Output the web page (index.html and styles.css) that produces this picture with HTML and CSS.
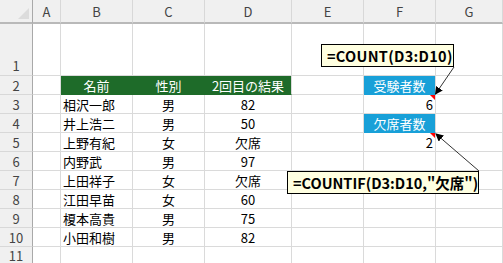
FILE: index.html
```html
<!DOCTYPE html>
<html lang="ja">
<head>
<meta charset="utf-8">
<link rel="stylesheet" href="styles.css">
</head>
<body>
<div class="sheet">
  <div class="corner"><span class="tri"></span></div>
  <div class="ch">A</div><div class="ch">B</div><div class="ch">C</div><div class="ch">D</div><div class="ch">E</div><div class="ch">F</div><div class="ch">G</div>

  <div class="rh r1">1</div><div class="c"></div><div class="c"></div><div class="c"></div><div class="c"></div><div class="c"></div><div class="c"></div><div class="c"></div>

  <div class="rh">2</div><div class="c"></div><div class="c green ctr">名前</div><div class="c green ctr">性別</div><div class="c green ctr last">2回目の結果</div><div class="c"></div><div class="c blue ctr">受験者数</div><div class="c"></div>

  <div class="rh">3</div><div class="c"></div><div class="c">相沢一郎</div><div class="c ctr">男</div><div class="c ctr">82</div><div class="c"></div><div class="c rgt mark">6</div><div class="c"></div>

  <div class="rh">4</div><div class="c"></div><div class="c">井上浩二</div><div class="c ctr">男</div><div class="c ctr">50</div><div class="c"></div><div class="c blue ctr">欠席者数</div><div class="c"></div>

  <div class="rh">5</div><div class="c"></div><div class="c">上野有紀</div><div class="c ctr">女</div><div class="c ctr">欠席</div><div class="c"></div><div class="c rgt mark">2</div><div class="c"></div>

  <div class="rh">6</div><div class="c"></div><div class="c">内野武</div><div class="c ctr">男</div><div class="c ctr">97</div><div class="c"></div><div class="c"></div><div class="c"></div>

  <div class="rh">7</div><div class="c"></div><div class="c">上田祥子</div><div class="c ctr">女</div><div class="c ctr">欠席</div><div class="c"></div><div class="c"></div><div class="c"></div>

  <div class="rh">8</div><div class="c"></div><div class="c">江田早苗</div><div class="c ctr">女</div><div class="c ctr">60</div><div class="c"></div><div class="c"></div><div class="c"></div>

  <div class="rh">9</div><div class="c"></div><div class="c">榎本高貴</div><div class="c ctr">男</div><div class="c ctr">75</div><div class="c"></div><div class="c"></div><div class="c"></div>

  <div class="rh">10</div><div class="c"></div><div class="c">小田和樹</div><div class="c ctr">男</div><div class="c ctr">82</div><div class="c"></div><div class="c"></div><div class="c"></div>

  <div class="rh last-row">11</div><div class="c"></div><div class="c"></div><div class="c"></div><div class="c"></div><div class="c"></div><div class="c"></div><div class="c"></div>

  <svg class="arrows" width="503" height="263" viewBox="0 0 503 263">
    <defs>
      <marker id="ah" markerWidth="8" markerHeight="8" refX="7" refY="4" orient="auto" markerUnits="userSpaceOnUse">
        <path d="M0,0 L8,4 L0,8 Z" fill="#000"/>
      </marker>
    </defs>
    <line x1="454" y1="67" x2="435.5" y2="94" stroke="#333" stroke-width="1" marker-end="url(#ah)"/>
    <line x1="479" y1="171" x2="436" y2="134" stroke="#333" stroke-width="1" marker-end="url(#ah)"/>
  </svg>

  <div class="note note1">=COUNT(D3:D10)</div>
  <div class="note note2">=COUNTIF(D3:D10,"欠席")</div>
</div>
</body>
</html>
```

FILE: styles.css
```css
html, body {
  margin: 0;
  padding: 0;
  background: #ffffff;
  overflow: hidden;
}

body {
  font-family: "Noto Sans CJK JP", "Noto Sans", sans-serif;
}

.sheet {
  position: relative;
  display: grid;
  grid-template-columns: 33px 28px 72px 72px 87px 72px 72px 67px;
  grid-template-rows: 24px 52px repeat(9, 19px) 17px;
  width: 503px;
  height: 263px;
  overflow: hidden;
}

.corner {
  background: #f0f0f0;
  border-right: 1px solid #a9a9a9;
  border-bottom: 2px solid #b9b9b9;
  position: relative;
}

.tri {
  position: absolute;
  left: 18px;
  top: 8px;
  width: 0;
  height: 0;
  border-left: 11px solid transparent;
  border-bottom: 11px solid #dcdcdc;
}

.ch {
  background: #f0f0f0;
  color: #444;
  font-size: 13px;
  display: flex;
  align-items: center;
  justify-content: center;
  border-right: 1px solid #d8d8d8;
  border-bottom: 2px solid #b9b9b9;
  padding-top: 1px;
}

.rh {
  background: #f0f0f0;
  color: #444;
  font-size: 13px;
  line-height: 16px;
  display: flex;
  align-items: center;
  justify-content: center;
  border-right: 1px solid #a9a9a9;
  border-bottom: 1px solid #d8d8d8;
  padding-top: 1px;
}

.rh.r1 {
  align-items: flex-end;
  padding-bottom: 1px;
}

.rh.last-row {
  padding-top: 0;
  border-bottom: 0;
}

.c {
  border-right: 1px solid #dadada;
  border-bottom: 1px solid #dadada;
  font-size: 13px;
  line-height: 18px;
  color: #000;
  display: flex;
  align-items: center;
  white-space: nowrap;
  overflow: hidden;
  padding: 1px 2px 0 2px;
  position: relative;
}

.ctr {
  justify-content: center;
}

.rgt {
  justify-content: flex-end;
}

.green {
  background: #1e6b29;
  color: #ffffff;
  border-right-color: #1e6b29;
  border-bottom-color: #1e6b29;
}

.green.last {
  border-right-color: #dadada;
}

.blue {
  background: #18a0d8;
  color: #ffffff;
  border-bottom-color: #18a0d8;
}

.mark::after {
  content: "";
  position: absolute;
  right: 0;
  top: 0;
  width: 0;
  height: 0;
  border-left: 5px solid transparent;
  border-top: 5px solid #ff0000;
}

.arrows {
  position: absolute;
  left: 0;
  top: 0;
  pointer-events: none;
  z-index: 2;
}

.note {
  position: absolute;
  box-sizing: border-box;
  background: #ffffe1;
  border: 1px solid #000;
  font-family: "Noto Sans CJK JP", sans-serif;
  font-weight: bold;
  font-size: 14.5px;
  line-height: 21px;
  color: #000;
  white-space: nowrap;
  padding-left: 5px;
  z-index: 3;
}

.note1 {
  left: 321px;
  top: 44px;
  width: 133px;
  height: 23px;
  letter-spacing: 0.3px;
}

.note2 {
  left: 287px;
  top: 171px;
  width: 192px;
  height: 23px;
}
```
